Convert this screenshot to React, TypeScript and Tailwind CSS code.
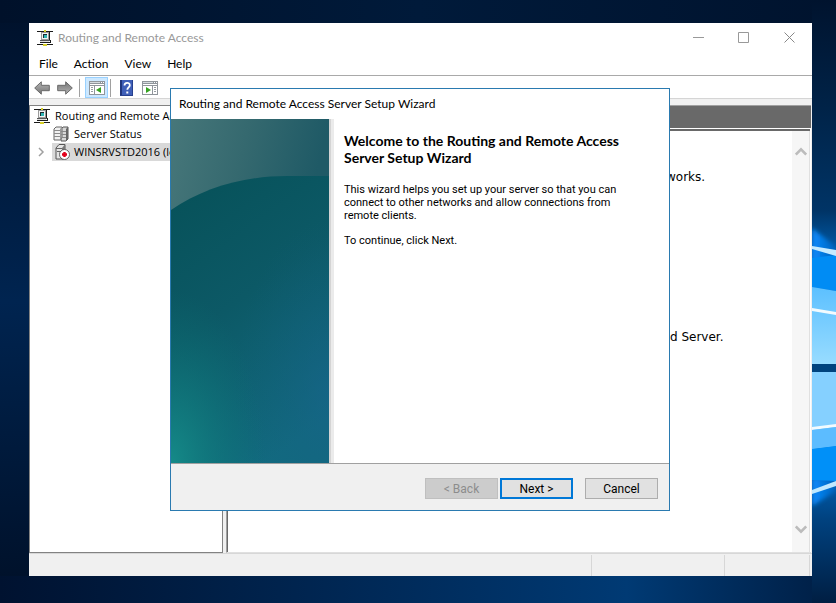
import { ReactNode } from "react";

type IconProps = {
    className?: string;
}

const RoutingIcon = ({ className = "" }: IconProps) => (
    <svg className={`size-4 shrink-0 ${className}`} viewBox="0 0 16 16" shapeRendering="crispEdges" aria-hidden="true">
        <path d="M0 1h16v1H0zM0 14h16v1H0z" fill="#1a1a1a" />
        <path d="M7 0h2v2H7zM6 14h4v2H6z" fill="#d6cf28" />
        <path d="M4 2h9v9H4z" fill="#1c1c1c" />
        <path d="M4 2h8v8H4z" fill="#9a9a9a" />
        <path d="M5 3h6v6H5z" fill="#f4f4f4" />
        <path d="M6 4h4v4H6z" fill="#1b2b33" />
        <path d="M7 5h3v3H7z" fill="#2fb5b5" />
        <path d="M3 10h10v1H3z" fill="#555" />
        <path d="M3 11h9v1H3z" fill="#e0e0e0" />
        <path d="M3 12h11v1H3zM13 10h1v3h-1z" fill="#1c1c1c" />
    </svg>
)

const ServersIcon = () => (
    <svg className="size-4 shrink-0" viewBox="0 0 16 16" aria-hidden="true">
        <path d="M8 3l2-2h5v12l-2 2H8z" fill="#d8d8d8" stroke="#555" />
        <path d="M13 3l2-2v12l-2 2z" fill="#666" />
        <path d="M1 3l2-2h6v11l-2 2H1z" fill="#f0f0f0" stroke="#666" />
        <path d="M7 3l2-2v11l-2 2z" fill="#9a9a9a" />
        <path d="M1 4.500h6M1 7.500h6M1 10.500h6M8 5.500h5M8 8.500h5M8 11.500h5" stroke="#8a8a8a" />
    </svg>
)

const StoppedServerIcon = () => (
    <svg className="size-4 shrink-0" viewBox="0 0 16 16" aria-hidden="true">
        <path d="M2 4l3-3.500h6V12l-2 3H2z" fill="#e4e4e4" stroke="#555" />
        <path d="M8 4l3-3.500V12l-3 3z" fill="#777" />
        <path d="M2 4.500h6M3 7.500h4" stroke="#666" />
        <circle cx="10.500" cy="10.500" r="5" fill="#fff" stroke="#444" strokeWidth=".8" />
        <path d="M10.500 8v5M8 10.500h5" stroke="#e2001a" strokeWidth="2.400" />
    </svg>
)

const ArrowIcon = ({ className = "" }: IconProps) => (
    <svg className={`h-[14px] w-4 ${className}`} viewBox="0 0 16 14" aria-hidden="true">
        <defs>
            <linearGradient id="arrow" x1="0" y1="0" x2="0" y2="1">
                <stop offset="0" stopColor="#b5b5b5" />
                <stop offset="1" stopColor="#757575" />
            </linearGradient>
        </defs>
        <path d="M.7 7l6.600-6.200v3.500h8v5.400h-8v3.500z" fill="url(#arrow)" stroke="#696969" strokeLinejoin="round" />
    </svg>
)

const PaneIcon = ({ flipped }: { flipped?: boolean }) => (
    <svg className="h-[14px] w-4" viewBox="0 0 16 14" shapeRendering="crispEdges" aria-hidden="true">
        <path d="M0 0h16v14H0z" fill="#8f959b" />
        <path d="M1 1h10v1H1z" fill="#d5dade" />
        <path d="M12 1h1v1h-1zM14 1h1v1h-1zM1 3h14v1H1z" fill="#fff" />
        {flipped ? (
            <>
                <path d="M1 5h9v8H1zM11 5h4v8h-4z" fill="#fff" />
                <path d="M12 6h2v1h-2zM12 8h2v1h-2zM12 10h2v1h-2z" fill="#969ca2" />
                <path d="M4 6l5 3-5 3z" fill="#35a321" shapeRendering="auto" />
            </>
        ) : (
            <>
                <path d="M1 5h4v8H1zM6 5h9v8H6z" fill="#fff" />
                <path d="M2 6h2v1H2zM2 8h2v1H2zM2 10h2v1H2z" fill="#969ca2" />
                <path d="M12 6L7 9l5 3z" fill="#35a321" shapeRendering="auto" />
            </>
        )}
    </svg>
)

const HelpIcon = () => (
    <svg className="h-4 w-[13px]" viewBox="0 0 13 16" aria-hidden="true">
        <path d="M0 0h13v16H0z" fill="#3f5fb8" />
        <path d="M0 0h2v16H0z" fill="#20357c" />
        <path d="M0 15h13v1H0zM12 0h1v16h-1z" fill="#27408e" />
        <path d="M4.500 5.500C4.500 2 9.800 2 9.800 5.200c0 2.200-2.500 2.300-2.500 4.600" fill="none" stroke="#fff" strokeWidth="1.800" />
        <path d="M6.300 11.500h2v2h-2z" fill="#fff" />
    </svg>
)

const Chevron = ({ className = "" }: IconProps) => (
    <svg className={`h-[9px] w-3 ${className}`} viewBox="0 0 12 9" aria-hidden="true">
        <path d="M.8 7.500L6 2.300l5.200 5.200" fill="none" stroke="#bcbcbc" strokeWidth="2.600" />
    </svg>
)

const Wallpaper = () => (
    <>
        <div className="absolute inset-0 bg-[#001a3a]" />
        <div className="absolute inset-y-0 left-0 w-[29px] bg-linear-to-b from-[#00112a] via-[#002450] to-[#001028]" />
        <div className="absolute inset-x-0 top-0 h-[23px] bg-linear-to-r from-[#00112a] via-[#001a3a] to-[#00132e]" />
        <div className="absolute inset-x-0 bottom-0 h-[27px] bg-linear-to-r from-[#001230] via-[#003a74] via-75% to-[#001e44]" />
        <svg className="absolute top-0 right-0 h-[603px] w-6" viewBox="0 0 24 603" aria-hidden="true">
            <defs>
                <linearGradient id="sky" x1="0" y1="0" x2="0" y2="1">
                    <stop offset="0" stopColor="#00132e" />
                    <stop offset=".18" stopColor="#002348" />
                    <stop offset=".35" stopColor="#003466" />
                    <stop offset=".45" stopColor="#0070cc" />
                    <stop offset=".75" stopColor="#0070cc" />
                    <stop offset=".86" stopColor="#004280" />
                    <stop offset="1" stopColor="#001e42" />
                </linearGradient>
                <linearGradient id="glow" x1="0" y1="0" x2="1" y2="0">
                    <stop offset="0" stopColor="#0a8cff" />
                    <stop offset="1" stopColor="#0062bc" />
                </linearGradient>
                <linearGradient id="pane" x1="0" y1="0" x2="0" y2="1">
                    <stop offset="0" stopColor="#5cc0ff" />
                    <stop offset="1" stopColor="#98dcff" />
                </linearGradient>
                <filter id="soft" x="-50%" y="-20%" width="200%" height="140%">
                    <feGaussianBlur stdDeviation="2" />
                </filter>
            </defs>
            <path d="M0 0h24v603H0z" fill="url(#sky)" />
            <path d="M0 228l24 19v48L0 288z" fill="url(#glow)" filter="url(#soft)" />
            <path d="M0 258l24-3v36L0 287z" fill="#008cf4" />
            <path d="M0 246l24 4v6L0 249z" fill="#c5eaff" />
            <path d="M0 287l24 4v73H0z" fill="url(#pane)" />
            <path d="M0 308l24 4v3L0 311z" fill="#f2fbff" />
            <path d="M0 364h24v8H0z" fill="#00437e" />
            <path d="M0 372h24v74L0 449z" fill="#85d0ff" />
            <path d="M0 427l24-3v3L0 430z" fill="#f2fbff" />
            <path d="M0 430l24-3v19L0 449z" fill="#5cbcff" />
            <path d="M0 478l24 1v12L0 506z" fill="url(#glow)" filter="url(#soft)" />
            <path d="M0 449l24-3v35L0 480z" fill="#0090f8" />
            <path d="M0 490l24-9v5L0 494z" fill="#bfe8ff" />
        </svg>
    </>
)

const WizardArt = () => (
    <svg className="h-full w-[158px] shrink-0" viewBox="0 0 158 344" preserveAspectRatio="none" aria-hidden="true">
        <defs>
            <linearGradient id="haze" x1="0" y1="0" x2=".8" y2=".4">
                <stop offset="0" stopColor="#47777a" />
                <stop offset=".5" stopColor="#35696f" />
                <stop offset="1" stopColor="#1f5a66" />
            </linearGradient>
            <linearGradient id="sea" x1=".2" y1="0" x2=".6" y2="1">
                <stop offset="0" stopColor="#07525a" />
                <stop offset=".45" stopColor="#0c5966" />
                <stop offset="1" stopColor="#126b80" />
            </linearGradient>
            <radialGradient id="teal" cx="0" cy="1" r=".6">
                <stop offset="0" stopColor="#158a88" />
                <stop offset="1" stopColor="#0a7072" stopOpacity="0" />
            </radialGradient>
            <radialGradient id="blue" cx="1" cy=".75" r=".6">
                <stop offset="0" stopColor="#17628a" stopOpacity=".6" />
                <stop offset="1" stopColor="#125c78" stopOpacity="0" />
            </radialGradient>
        </defs>
        <path d="M0 0h158v344H0z" fill="url(#haze)" />
        <path d="M0 91C32 69 73 57 116 57h42v287H0z" fill="url(#sea)" />
        <path d="M0 91C32 69 73 57 116 57h42v287H0z" fill="url(#blue)" />
        <path d="M0 91C32 69 73 57 116 57h42v287H0z" fill="url(#teal)" />
    </svg>
)

const MenuItem = ({ children }: { children: ReactNode }) => (
    <button type="button" className="px-2">{children}</button>
)

const TreePane = () => (
    <nav aria-label="Console tree" className="w-[194px] shrink-0 overflow-hidden border border-[#828282] bg-white pt-px font-['Open_Sans','Segoe_UI',sans-serif] text-[11px] whitespace-nowrap">
        <ul>
            <li className="flex h-[18px] items-center gap-[5px] pl-1">
                <RoutingIcon />
                Routing and Remote Access
            </li>
            <li className="flex h-[18px] items-center gap-[5px] pl-[23px]">
                <ServersIcon />
                Server Status
            </li>
            <li className="flex h-[18px] items-center">
                <button type="button" aria-label="Expand" className="flex w-[22px] justify-center">
                    <svg className="h-[10px] w-[7px]" viewBox="0 0 7 10" aria-hidden="true">
                        <path d="M1 1l4 4-4 4" fill="none" stroke="#a0a0a0" strokeWidth="1.500" />
                    </svg>
                </button>
                <span className="flex h-full flex-1 items-center gap-1 bg-[#d9d9d9] pl-[2px]">
                    <StoppedServerIcon />
                    WINSRVSTD2016 (local)
                </span>
            </li>
        </ul>
    </nav>
)

const DetailsPane = () => (
    <main className="flex min-w-0 flex-1 flex-col border-b border-l border-b-[#e0e0e0] border-l-[#a0a0a0] bg-white">
        <div className="h-[23px] border-t border-[#a0a0a0] bg-[#696969]" />
        <div className="mt-px mr-px flex flex-1 border-t-2 border-l border-[#696969]">
            <div className="flex-1 pt-[38px] font-['DejaVu_Sans',Verdana,sans-serif] text-[12px] leading-4">
                <p className="pl-[438px]">works.</p>
                <p className="mt-36 pl-[442px]">d Server.</p>
            </div>
            <div className="flex w-[18px] flex-col items-center justify-between border-r border-[#e0e0e0] bg-[#f6f6f6] pt-4 pb-[18px]">
                <Chevron />
                <Chevron className="rotate-180" />
            </div>
        </div>
    </main>
)

const Wizard = () => (
    <section
        role="dialog"
        aria-labelledby="wizard-title"
        className="absolute top-[88px] left-[170px] flex h-[423px] w-[500px] flex-col border border-[#2a7ab0] bg-white"
    >
        <h1 id="wizard-title" className="flex h-[30px] items-center px-2">Routing and Remote Access Server Setup Wizard</h1>
        <div className="flex min-h-0 flex-1">
            <WizardArt />
            <div className="w-[5px] border-l-2 border-[#d4d4d4] bg-[#ebebeb]" />
            <div className="flex-1 pt-[13px] pl-[10px] font-[Roboto,'Liberation_Sans',Arial,sans-serif] text-[11px] leading-[13px]">
                <h2 className="font-[Lato,'Segoe_UI',sans-serif] text-[14px] leading-[17px] font-bold">
                    Welcome to the Routing and Remote Access
                    <br />
                    Server Setup Wizard
                </h2>
                <p className="mt-[17px]">
                    This wizard helps you set up your server so that you can
                    <br />
                    connect to other networks and allow connections from
                    <br />
                    remote clients.
                </p>
                <p className="mt-3">To continue, click Next.</p>
            </div>
        </div>
        <div className="flex h-[47px] items-start justify-end border-t border-[#a0a0a0] bg-[#f0f0f0] pt-[14px] pr-[11px] font-[Roboto,'Liberation_Sans',Arial,sans-serif] text-[12px]">
            <button type="button" disabled className="h-[21px] w-[73px] border border-[#bfbfbf] bg-[#cccccc] text-[#8c8c8c]">&lt; Back</button>
            <button type="button" className="ml-[2px] h-[21px] w-[73px] border-2 border-[#0078d7] bg-[#e1e1e1]">Next &gt;</button>
            <button type="button" className="ml-3 h-[21px] w-[73px] border border-[#adadad] bg-[#e1e1e1]">Cancel</button>
        </div>
    </section>
)

const App = () => {
  return (
    <div className="relative flex min-h-screen flex-col overflow-hidden pt-[23px] pr-6 pb-[27px] pl-[29px] font-[Lato,'Segoe_UI',sans-serif] text-[12px] leading-4 text-black">
        <Wallpaper />
        {/* CONSOLE WINDOW */}
        <div className="relative flex flex-1 flex-col bg-white">
            <header className="flex h-[29px] items-center pl-2 text-[#999999]">
                <RoutingIcon />
                <span className="ml-[5px] flex-1">Routing and Remote Access</span>
                <button type="button" aria-label="Minimize" className="flex h-full w-[45px] items-center justify-center">
                    <svg className="size-[11px]" viewBox="0 0 11 11"><path d="M0 5.500h11" stroke="#999" /></svg>
                </button>
                <button type="button" aria-label="Maximize" className="flex h-full w-[45px] items-center justify-center">
                    <svg className="size-[11px]" viewBox="0 0 11 11"><path d="M.5.500h10v10H.5z" fill="none" stroke="#999" /></svg>
                </button>
                <button type="button" aria-label="Close" className="flex h-full w-[46px] items-center justify-center">
                    <svg className="size-[11px]" viewBox="0 0 11 11"><path d="M.5.500l10 10M10.500.500l-10 10" stroke="#888" /></svg>
                </button>
            </header>
            <nav aria-label="Menu" className="flex h-6 items-center border-b border-[#a9a9a9] pl-[2px]">
                <MenuItem>File</MenuItem>
                <MenuItem>Action</MenuItem>
                <MenuItem>View</MenuItem>
                <MenuItem>Help</MenuItem>
            </nav>
            {/* TOOLBAR */}
            <div className="flex h-[23px] items-center border-b border-[#d5d5d5] pt-px pl-[5px]">
                <button type="button" aria-label="Back"><ArrowIcon /></button>
                <button type="button" aria-label="Forward" className="ml-[7px]"><ArrowIcon className="rotate-180" /></button>
                <span className="ml-[6px] h-[18px] w-px bg-[#a0a0a0]" />
                <button type="button" aria-label="Show console tree" className="ml-[5px] flex h-[21px] w-[23px] items-center justify-center border border-[#99d1ff] bg-[#cce8ff]">
                    <PaneIcon />
                </button>
                <span className="ml-[2px] h-[18px] w-px bg-[#a0a0a0]" />
                <button type="button" aria-label="Help" className="ml-[9px]"><HelpIcon /></button>
                <button type="button" aria-label="Show action pane" className="ml-[9px]"><PaneIcon flipped /></button>
            </div>
            <div className="flex flex-1 gap-[3px] bg-[#f0f0f0] pt-[6px] pr-px">
                <TreePane />
                <DetailsPane />
            </div>
            <footer className="flex h-[23px] justify-end border-t border-[#d7d7d7] bg-[#f0f0f0] pt-px pr-[2px]">
                <span className="w-[133px] border-l border-[#d7d7d7]" />
                <span className="w-[86px] border-x border-[#d7d7d7]" />
            </footer>
        </div>
        <Wizard />
    </div>
  )
}

export default App
